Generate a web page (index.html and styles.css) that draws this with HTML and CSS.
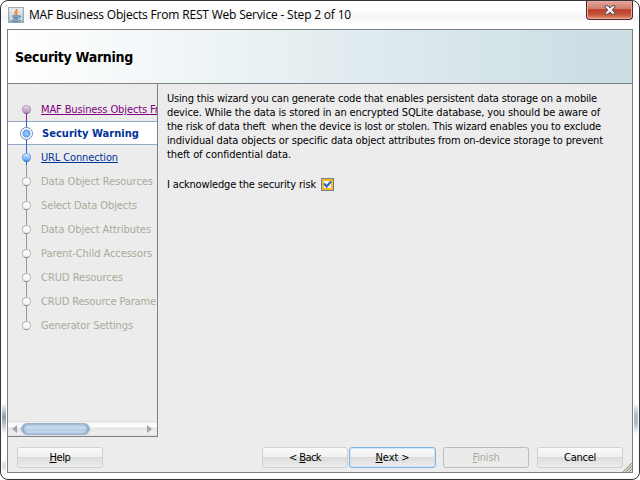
FILE: index.html
```html
<!DOCTYPE html>
<html lang="en">
<head>
<meta charset="utf-8">
<title>MAF Business Objects From REST Web Service</title>
<link rel="stylesheet" href="styles.css">
</head>
<body>
<div class="window">
  <div class="titlebar">
    <svg class="java" width="16" height="16" viewBox="0 0 16 16">
      <defs><linearGradient id="jb" x2="0" y2="1"><stop offset="0" stop-color="#dce3e8"/><stop offset="1" stop-color="#7f9cb4"/></linearGradient></defs>
      <rect x=".5" y=".5" width="15" height="15" fill="url(#jb)" stroke="#9aabb8"/>
      <rect x="1.5" y="1.5" width="13" height="13" fill="#f4f6f7" opacity=".55"/>
      <path d="M8.5 2c1 2-3 3-1.500 6M10 4.500c-2 1-2 2-.8 3.500" fill="none" stroke="#ee7c2b" stroke-width="1.300"/>
      <path d="M4 9h7M5 10.800h5.500M5.500 12.200h4.500M3 13.700c3 .8 7 .8 9.500-.2M11 9c2-.8 2.500 1-.2 2.300" fill="none" stroke="#396d98" stroke-width="1"/>
    </svg>
    <h1><span class="fit" data-width="322">MAF Business Objects From REST Web Service - Step 2 of 10</span></h1>
    <button class="close" aria-label="Close">
      <svg width="12" height="10" viewBox="0 0 12 10"><path d="M1 .8h3L6 3 8 .8h3V2L8.200 5 11 8v1.200H8L6 7 4 9.200H1V8l2.800-3L1 2z" fill="#f5f5f5" stroke="#554b57" stroke-width="1"/></svg>
    </button>
  </div>
  <div class="client">
    <header><h2><span class="fit" data-width="118">Security Warning</span></h2></header>
    <div class="main">
      <nav>
        <ol class="steps">
          <li class="visited"><i></i><a class="fit" data-width="133">MAF Business Objects From</a></li>
          <li class="current"><i></i><b class="fit" data-width="97">Security Warning</b></li>
          <li class="next"><i></i><a class="fit" data-width="77">URL Connection</a></li>
          <li><i></i><span class="fit" data-width="112">Data Object Resources</span></li>
          <li><i></i><span class="fit" data-width="96">Select Data Objects</span></li>
          <li><i></i><span class="fit" data-width="110">Data Object Attributes</span></li>
          <li><i></i><span class="fit" data-width="111">Parent-Child Accessors</span></li>
          <li><i></i><span class="fit" data-width="82">CRUD Resources</span></li>
          <li><i></i><span class="fit" data-width="115">CRUD Resource Parame</span></li>
          <li><i></i><span class="fit" data-width="92">Generator Settings</span></li>
        </ol>
        <div class="scroll">
          <svg width="5" height="8"><path d="M5 0v8L0 4z" fill="#a5a5a5"/></svg>
          <div class="track"><div class="thumb"></div></div>
          <svg width="5" height="8"><path d="M0 0v8l5-4z" fill="#a5a5a5"/></svg>
        </div>
      </nav>
      <section>
        <p>
          <span class="fit" data-width="430">Using this wizard you can generate code that enables persistent data storage on a mobile</span><br>
          <span class="fit" data-width="433">device. While the data is stored in an encrypted SQLite database, you should be aware of</span><br>
          <span class="fit" data-width="434">the risk of data theft&nbsp; when the device is lost or stolen. This wizard enables you to exclude</span><br>
          <span class="fit" data-width="436">individual data objects or specific data object attributes from on-device storage to prevent</span><br>
          <span class="fit" data-width="124">theft of confidential data.</span>
        </p>
        <div class="ack"><span class="fit" data-width="149">I acknowledge the security risk</span>
          <span class="check"><svg width="9" height="9" viewBox="0 0 9 9"><path d="M1 3.500L3.700 6.500 8 1.500" fill="none" stroke="#3467c0" stroke-width="2.200"/></svg></span>
        </div>
      </section>
    </div>
    <footer>
      <button class="btn help"><span class="fit" data-width="21"><u>H</u>elp</span></button>
      <button class="btn"><span class="fit" data-width="32">&lt; <u>B</u>ack</span></button>
      <button class="btn primary"><span class="fit" data-width="34"><u>N</u>ext &gt;</span></button>
      <button class="btn disabled"><span class="fit" data-width="27"><u>F</u>inish</span></button>
      <button class="btn cancel"><span class="fit" data-width="32">Cancel</span></button>
    </footer>
    <svg class="grip" width="9" height="9" viewBox="0 0 9 9"><path d="M0 9L9 0M3 9L9 3M6 9L9 6" stroke="#9b9b8c" stroke-width="1.200"/></svg>
  </div>
</div>
<script src="fit.js"></script>
</body>
</html>
```
FILE: styles.css
```css
* { box-sizing: border-box; }
body { margin: 0; background: #fff; color: #000; font: 11px/14px "DejaVu Sans Condensed", "DejaVu Sans", sans-serif; }
h1, h2, p, ol { margin: 0; padding: 0; }
.fit { display: inline-block; white-space: pre; }
.window {
  position: relative; width: 640px; height: 480px; padding: 0 6px 6px; overflow: hidden;
  border: 1px solid #353539; border-radius: 8px;
  background:
    linear-gradient(transparent, #8d9caa 45%, #a9b5c0 60%, transparent) 1px 402px / 4px 31px no-repeat,
    linear-gradient(transparent, #a9bccd 40%, #a9bccd 65%, transparent) 633px 402px / 4px 31px no-repeat,
    linear-gradient(transparent, #ddd8d8, transparent) 1px 458px / 4px 14px no-repeat,
    linear-gradient(#fff 8px, #f5f5f5 17px, #fff 23px) 0 0 / 100% 28px no-repeat,
    #fff;
}
.titlebar { display: flex; height: 28px; padding-left: 1px; align-items: flex-start; }
.java { margin-top: 6px; }
h1 { flex: 1; margin: 5px 0 0 5px; font: 12px/18px "Open Sans", sans-serif; }
.close {
  display: flex; align-items: center; justify-content: center; width: 47px; height: 19px; padding: 0 0 1px 1px;
  border: 1px solid #562126; border-top: 0; border-radius: 0 0 4px 4px;
  background: linear-gradient(#e3a99c, #d0796a 45%, #b93d28 48%, #c8553a 75%, #e19778);
  box-shadow: inset 0 0 0 1px #e8aaa0;
}
.client { position: relative; display: flex; flex-direction: column; width: 626px; height: 444px; border: 1px solid #808084; background: #ececec; }
header { height: 54px; border-bottom: 1px solid #808084; background: linear-gradient(90deg, #fff 0, #cddfe5 92%); }
h2 { padding: 17px 0 0 7px; font: bold 14px/20px "DejaVu Sans Condensed", sans-serif; }
.main { display: flex; height: 353px; }
nav { display: flex; flex-direction: column; width: 150px; border: solid #808084; border-width: 0 1px 1px 0; overflow: hidden; }
.steps { flex: 1; padding-top: 13px; list-style: none; }
.steps li { position: relative; display: flex; align-items: center; height: 24px; padding-left: 14px; color: #aaaa99; white-space: nowrap; }
.steps .fit { padding-top: 1px; line-height: 15px; }
.steps li::before { content: ""; position: absolute; left: 18px; top: 0; width: 1px; height: 24px; background: #999; }
.steps li:first-child::before { top: 12px; height: 12px; background: #7b2383; }
.steps li:last-child::before { height: 12px; }
.steps i { position: relative; flex: none; width: 9px; height: 9px; margin-right: 10px; border: 1px solid #b5b8bb; border-bottom-color: #888; border-radius: 50%; background: #f7fafb; }
.steps .visited { color: #800080; }
.visited i { border-color: #b69ac0 #ae91b8 #805d8d; background: linear-gradient(#e6d7ed, #b291c1); }
.steps a { text-decoration: underline; text-underline-offset: 1px; }
.steps .current { padding-left: 12px; color: #003399; border: solid #93a8c9; border-width: 1px 0; background: #fff; }
.steps .current::before { top: -1px; background: #3463d5; }
.steps .current i { width: 13px; height: 13px; margin-right: 9px; border-color: #6890b5; background: radial-gradient(circle at 50% 50%, #a9d6ff 0, #5b9ee9 3.500px, #fff 4.500px); }
.steps .next { color: #003399; }
.steps .next::before { background: linear-gradient(#3463d5 20px, #999 20px); }
.next i { border-color: #7fa7dc #6699da #376dba; background: linear-gradient(#d9edff, #559ff3); }
.scroll { display: flex; align-items: center; height: 15px; padding: 0 5px 0 4px; gap: 4px; background: linear-gradient(#f1f1f1, #fff 30%, #e5e5e5 45%, #eee 80%, #e3e3e3); border-top: 1px solid #ddd; }
.track { flex: 1; }
.thumb { width: 69px; height: 12px; border: 1px solid #9ab2ce; border-radius: 6px; background: linear-gradient(#b8cee4, #cadcec 45%, #b4cce3 50%, #c9ddf0); box-shadow: inset 2px 0 2px #89a7c8, inset -2px 0 2px #89a7c8; }
section { flex: 1; padding: 8px 0 0 9px; }
.ack { display: flex; align-items: center; height: 14px; margin-top: 16px; }
.check { display: grid; place-items: center; width: 13px; height: 13px; margin: -1px 0 0 5px; border: 1px solid #777f8c; background: #f3f8ff; box-shadow: inset 0 0 0 2px #f6b927; }
footer { display: flex; padding: 10px 9px 0; }
.btn { display: flex; align-items: center; justify-content: center; width: 86px; height: 21px; margin-right: 1px; padding: 0; color: #000; font: inherit; border: 1px solid #cfd1d1; border-radius: 3px; background: linear-gradient(#fafafa, #f1f1f1 45%, #dcdcdc 50%, #ececec); }
.btn u { text-underline-offset: 1px; }
.help { margin-right: 159px; }
.primary { width: 87px; margin-right: 7px; border-color: #7eb3e6; box-shadow: inset 0 0 0 1px #d3e4f4; }
.disabled { margin-right: 8px; border-color: #b9bdbd; background: #eaecec; color: #aaaa99; }
.cancel { margin-right: 0; }
.grip { position: absolute; right: 0; bottom: 0; }
```
FILE: fit.js
```js
// Spread each label's tracking so its line keeps its designed width.
document.querySelectorAll('.fit').forEach(function (el) {
  var target = Number(el.dataset.width);
  var count = el.textContent.length;
  var spacing = (target - el.getBoundingClientRect().width) / count;
  el.style.letterSpacing = spacing + 'px';
});
```
